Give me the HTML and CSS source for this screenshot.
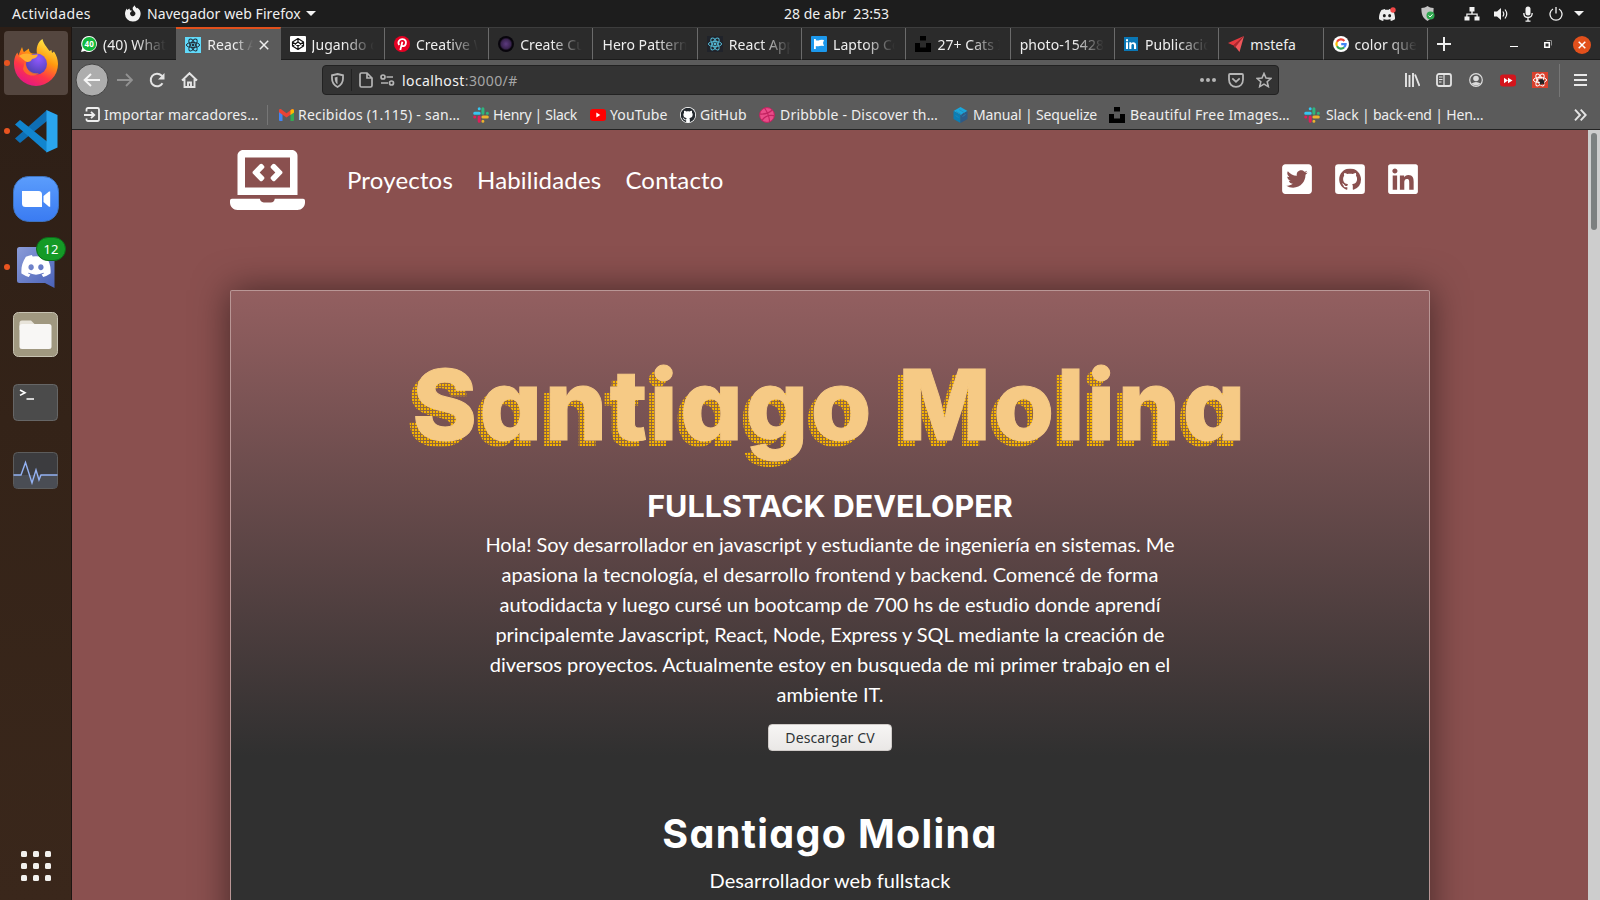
FILE: index.html
```html
<!DOCTYPE html>
<html lang="es">
<head>
<meta charset="utf-8">
<title>React App</title>
<link rel="stylesheet" href="styles.css">
</head>
<body>
<svg class="defs" width="0" height="0">
  <defs>
    <linearGradient id="ffg" x1="0.8" y1="0" x2="0.3" y2="1"><stop offset="0" stop-color="#fff44f"/><stop offset=".4" stop-color="#ff980e"/><stop offset=".7" stop-color="#ff3647"/><stop offset="1" stop-color="#e31587"/></linearGradient>
    <radialGradient id="ffp" cx=".6" cy=".25" r=".8"><stop offset="0" stop-color="#9059ff"/><stop offset="1" stop-color="#4b3fae"/></radialGradient>
    <linearGradient id="zoomg" x1="0" y1="0" x2="0" y2="1"><stop offset="0" stop-color="#5b9dfc"/><stop offset="1" stop-color="#3a7bf2"/></linearGradient>
    <linearGradient id="disg" x1="0" y1="0" x2="1" y2="1"><stop offset="0" stop-color="#8a9bd8"/><stop offset="1" stop-color="#4a62b8"/></linearGradient>
    <radialGradient id="orb"><stop offset="0" stop-color="#5d3a80"/><stop offset=".6" stop-color="#3a2450"/><stop offset=".8" stop-color="#08050c"/><stop offset="1" stop-color="#08050c"/></radialGradient>
    <symbol id="react" viewBox="0 0 16 16"><g fill="none" stroke="currentColor" stroke-width="1"><ellipse cx="8" cy="8" rx="6.6" ry="2.6"/><ellipse cx="8" cy="8" rx="6.6" ry="2.6" transform="rotate(60 8 8)"/><ellipse cx="8" cy="8" rx="6.6" ry="2.6" transform="rotate(120 8 8)"/></g><circle cx="8" cy="8" r="1.4" fill="currentColor"/></symbol>
    <symbol id="slack" viewBox="0 0 16 16"><g stroke-width="3" stroke-linecap="round"><path d="M6.2 1.7v.1M1.7 6.2h4.5" stroke="#36c5f0"/><path d="M9.9 1.7v4.5M14.3 6.2h.1" stroke="#2eb67d"/><path d="M9.9 14.3v-.1M9.9 9.9h4.4" stroke="#ecb22e"/><path d="M1.7 9.9h.1M6.2 9.9v4.4" stroke="#e01e5a"/></g></symbol>
    <symbol id="unsplash" viewBox="0 0 16 16"><path fill="#000" d="M5 0h6v4.5H5zM0 7h5v4.500h6V7h5v9H0z"/></symbol>
    <symbol id="cat" viewBox="0 0 16 16"><path d="M8 0C3.58 0 0 3.58 0 8c0 3.54 2.29 6.53 5.47 7.59.4.07.55-.17.55-.38 0-.19-.01-.82-.01-1.49-2.01.37-2.53-.49-2.69-.94-.09-.23-.48-.94-.82-1.13-.28-.15-.68-.52-.01-.53.63-.01 1.08.58 1.23.82.72 1.21 1.87.87 2.33.66.07-.52.28-.87.51-1.07-1.78-.2-3.64-.89-3.64-3.95 0-.87.31-1.59.82-2.15-.08-.2-.36-1.02.08-2.12 0 0 .67-.21 2.2.82.64-.18 1.32-.27 2-.27.68 0 1.36.09 2 .27 1.53-1.04 2.2-.82 2.2-.82.44 1.1.16 1.92.08 2.12.51.56.82 1.27.82 2.15 0 3.07-1.87 3.75-3.65 3.95.29.25.54.73.54 1.48 0 1.07-.01 1.93-.01 2.2 0 .21.15.46.55.38A8.013 8.013 0 0 0 16 8c0-4.42-3.58-8-8-8z" fill="currentColor"/></symbol>
    <symbol id="discord" viewBox="0 0 24 18"><path fill="currentColor" d="M20.300 1.500A19.800 19.800 0 0 0 15.400 0l-.7 1.300a18 18 0 0 0-5.400 0L8.600 0a19.700 19.700 0 0 0-4.900 1.500C.6 6.200-.3 10.700.1 15.200A20 20 0 0 0 6.100 18l1.300-2.100-2-.9.500-.4a14 14 0 0 0 12.200 0l.5.400-2 .9L17.900 18a20 20 0 0 0 6-2.800c.5-5.200-.8-9.700-3.600-13.700zM8 12.400c-1.200 0-2.200-1.100-2.200-2.400S6.800 7.600 8 7.600s2.200 1.100 2.200 2.400-1 2.400-2.200 2.400zm8 0c-1.200 0-2.200-1.100-2.200-2.400s1-2.400 2.200-2.400 2.200 1.100 2.200 2.400-1 2.400-2.200 2.400z"/></symbol>
  </defs>
</svg>

<header class="topbar">
  <span class="activities">Actividades</span>
  <div class="app-menu">
    <svg width="17" height="17" viewBox="0 0 17 17"><path fill="#f2f2f2" d="M8.500 16.500A7.600 7.600 0 0 1 1 9C1 6.800 1.700 5 2.800 3.500L3.200 5l2.200-1.500L6 5.300l2 .5-1.700 1.600c-.8 1.700.3 3.700 2.200 3.900 2.200.2 3.500-2 2.700-3.800C10.500 6 8 5 8.800 2.500L10.700.3c.2 1.500 1.200 2 2.300 3.200l.3-.8A7.600 7.600 0 0 1 8.500 16.500z"/></svg>
    <span>Navegador web Firefox</span><i class="caret"></i>
  </div>
  <span class="clock">28 de abr&nbsp; 23:53</span>
  <div class="tray">
    <svg class="t-discord" width="17" height="14" viewBox="0 0 17 14"><g color="#eee"><use href="#discord" y="2" width="16" height="12"/></g><circle cx="14" cy="3" r="2.700" fill="#f04747"/></svg>
    <svg class="t-shield" width="14" height="16" viewBox="0 0 14 16"><path fill="#c4c4c4" d="M6.500 0C8 1.300 10 2 12.600 2c0 6-1 10-6.100 13C1.500 12 .4 8 .4 2 3 2 5 1.300 6.500 0z"/><circle cx="9.500" cy="9.500" r="4" fill="#2fa84f"/><path d="m7.600 9.500 1.500 1.500 2.400-2.700" stroke="#fff" fill="none"/></svg>
    <svg class="t-net" width="16" height="14" viewBox="0 0 16 14"><path fill="#f2f2f2" d="M5.500 0h5v4.500H8.700v2h5v3H15.500V13.500h-5v-4h2V7.700h-9v1.800h2v4h-5v-4h1.800v-3h5v-2H5.500z"/></svg>
    <svg class="t-vol" width="16" height="14" viewBox="0 0 16 14"><path fill="#f2f2f2" d="M1 4.500h3L8 1v12L4 9.500H1z"/><path d="M9.800 4.500q2 2.500 0 5M12 2.500q3.500 4.500 0 9" fill="none" stroke="#f2f2f2" stroke-width="1.200"/></svg>
    <svg class="t-mic" width="10" height="16" viewBox="0 0 10 16"><rect x="2.500" y=".5" width="5" height="9" rx="2.500" fill="#f2f2f2"/><path d="M.8 7c0 6 8.400 6 8.400 0M5 11.500V15M2.500 15.200h5" fill="none" stroke="#f2f2f2" stroke-width="1.300"/></svg>
    <svg class="t-pow" width="14" height="14" viewBox="0 0 14 14"><path d="M4 2a6 6 0 1 0 6 0M7 0v6.500" fill="none" stroke="#f2f2f2" stroke-width="1.300"/></svg>
    <i class="caret"></i>
  </div>
</header>

<div class="desktop">
  <nav class="dock">
    <div class="launcher focused running">
      <svg width="46" height="48" viewBox="0 0 46 48"><path fill="url(#ffg)" d="M23 47A22 22 0 0 1 1 25c0-6 2-10 3.500-11.500l.8 3L9 8c1 2.500 1 4 2 5l5-3.500c-.2 3 1.300 4.500 3.500 5L24 15c-1-6 .5-12 5.500-15 1 5 4 7.500 7 12l2-1 .5 3 2-1.500c2.500 4 4 8 4 12.500a22 22 0 0 1-22 22z"/><circle cx="23.500" cy="25" r="10.500" fill="url(#ffp)"/><path fill="#ffb02e" d="M6 17c5-3 9-3 13-1l6-.5c-1 3-3 4-6 4.500-1 3-5 4-7 2z"/><path fill="#ff7b1c" opacity=".7" d="M12 22c0 7 6 14 14 12-6 5-14 2-16-4z"/></svg>
    </div>
    <div class="launcher running">
      <svg width="43" height="43" viewBox="0 0 43 43"><path fill="#0e6eb3" d="M0 28.500 5 33 32 11V0z"/><path fill="#1185cf" d="M0 14.500 5 10l27 21.500V42.500z"/><path fill="#2aa5ee" d="M31.500 0 42.500 5v32.500l-11 5z"/></svg>
    </div>
    <div class="launcher">
      <svg width="46" height="46" viewBox="0 0 46 46"><rect x=".5" y=".5" width="45" height="45" rx="15" fill="url(#zoomg)" stroke="#3f73bd"/><path fill="#fff" d="M9 15h16.500a3.500 3.500 0 0 1 3.500 3.500V31H12.500A3.500 3.500 0 0 1 9 27.500zM30.500 20l5.500-4.500h1.200v15.200H36L30.500 26z"/></svg>
    </div>
    <div class="launcher running">
      <svg width="38" height="41" viewBox="0 0 38 41"><path fill="url(#disg)" d="M2.500 0h35v41L28 36H2.500A2.500 2.500 0 0 1 0 33.500v-31A2.500 2.500 0 0 1 2.500 0z"/><g color="#fff"><use href="#discord" x="4" y="8" width="30" height="22"/></g></svg>
      <span class="badge">12</span>
    </div>
    <div class="launcher tile">
      <svg width="45" height="45" viewBox="0 0 45 45"><rect x=".5" y=".5" width="44" height="44" rx="5" fill="#a09880" stroke="#c7c2b2"/><path fill="#e8e4da" d="M6.500 11A2.500 2.500 0 0 1 9 8.500h9l3.500 3.500v6h-15z"/><rect x="6.500" y="12" width="32" height="25" rx="2.500" fill="#f8f7f5"/></svg>
    </div>
    <div class="launcher tile">
      <svg width="45" height="37" viewBox="0 0 45 37"><rect x=".5" y=".5" width="44" height="36" rx="4" fill="#4b4b4b" stroke="#666"/><path d="m7 6 5 2.700-5 2.700M13.500 15H21" stroke="#fff" stroke-width="1.600" fill="none"/></svg>
    </div>
    <div class="launcher tile">
      <svg width="45" height="37" viewBox="0 0 45 37"><rect x=".5" y=".5" width="44" height="36" rx="4" fill="#3c3c3f" stroke="#5c5c5c"/><path fill="#4a4d54" d="M1 23h43v13H1z"/><path d="M.5 23H8l4.500-12.500L19 31l4-13 3 10 2-5h16.500" fill="none" stroke="#94b2f3" stroke-width="1.400"/></svg>
    </div>
    <div class="grid-button"><i></i><i></i><i></i><i></i><i></i><i></i><i></i><i></i><i></i></div>
  </nav>

  <section class="browser">
    <div class="tabs">
      <div class="tab"><svg width="16" height="16" viewBox="0 0 16 16"><path fill="#fff" d="M8 0a8 8 0 1 1-4 15L0 16l1.200-4A8 8 0 0 1 8 0z"/><circle cx="8.200" cy="8" r="7" fill="#12b93d"/><text x="8.200" y="11" text-anchor="middle" class="count">40</text></svg><span>(40) WhatsApp</span></div>
      <div class="tab active"><svg width="16" height="16" viewBox="0 0 16 16" color="#20303c"><path fill="#61dafb" d="M0 0h16v16H0z"/><use href="#react" width="16" height="16"/></svg><span>React App</span><svg class="close" width="10" height="10" viewBox="0 0 10 10"><path d="m.8.8 8.400 8.400m0-8.400L.8 9.200" stroke="#eee" stroke-width="1.500"/></svg></div>
      <div class="tab"><svg width="16" height="16" viewBox="0 0 16 16"><rect width="16" height="16" rx="1" fill="#fff"/><path d="m8 2.500 5.500 3.500v4L8 13.500 2.500 10V6zM8 2.500V6m0 4v3.500M2.500 6 8 10l5.500-4m-11 4L8 6l5.500 4" fill="none" stroke="#111" stroke-width="1.200" stroke-linejoin="round"/></svg><span>Jugando con</span></div>
      <div class="tab"><svg width="16" height="16" viewBox="0 0 16 16"><circle cx="8" cy="8" r="8" fill="#e60023"/><path d="M5.200 9C3 5.500 6 3 8.500 3.200c3 .2 4 2.500 3.200 4.900-.8 2.300-3.200 2.600-3.900 1.300M8.400 5.800 6.300 14" fill="none" stroke="#fff" stroke-width="1.800"/></svg><span>Creative Web</span></div>
      <div class="tab"><svg width="16" height="16" viewBox="0 0 16 16"><circle cx="8" cy="8" r="8" fill="url(#orb)"/></svg><span>Create Custom</span></div>
      <div class="tab"><span>Hero Patterns</span></div>
      <div class="tab"><svg width="16" height="16" viewBox="0 0 16 16" color="#53b7d2"><path fill="#20232a" d="M0 0h16v16H0z"/><use href="#react" width="16" height="16"/></svg><span>React App</span></div>
      <div class="tab"><svg width="16" height="16" viewBox="0 0 16 16"><rect width="16" height="16" rx="1" fill="#1c98ec"/><path fill="#fff" d="M3 3h1.800v1.200q2 .8 4-.2 2-.6 4.200 0l-1 3 1 3q-2.500-.7-4.400 0-2 .6-3.800 0v3H3z"/></svg><span>Laptop Code</span></div>
      <div class="tab"><svg width="16" height="16"><use href="#unsplash" width="16" height="16"/></svg><span>27+ Cats Images</span></div>
      <div class="tab"><span>photo-1542831</span></div>
      <div class="tab"><svg width="14" height="14" viewBox="0 0 14 14" class="narrow"><path fill="#0a77b5" d="M0 0h14v14H0z"/><path fill="#fff" d="M2 5.300h2V12H2zM2 2.300h2v2H2zM5.300 5.300h2v.9c1.200-1.700 4.800-1.400 4.800 1.700V12H10V8.500c0-2-2.600-2-2.600 0V12H5.300z"/></svg><span>Publicación</span></div>
      <div class="tab"><svg width="16" height="16" viewBox="0 0 16 16"><path fill="#e5393f" d="M16 0 0 7l5.500 2.500z"/><path fill="#b3262d" d="M16 0 5.500 9.500 7 12z"/><path fill="#f0575b" d="m16 0-8.500 11 4 5z"/></svg><span class="whole">mstefa</span></div>
      <div class="tab"><svg width="16" height="16" viewBox="0 0 16 16"><circle cx="8" cy="8" r="8" fill="#fff"/><g fill="none" stroke-width="2.200"><path d="M11.400 4.900A4.600 4.600 0 0 0 4 5.800" stroke="#ea4335"/><path d="M4 5.800a4.600 4.600 0 0 0 0 4.500" stroke="#fbbc05"/><path d="M4 10.300a4.600 4.600 0 0 0 7.200 1" stroke="#34a853"/><path d="M11.200 11.300a4.600 4.600 0 0 0 1.400-3.100H8.200" stroke="#4285f4"/></g></svg><span>color que con</span></div>
      <div class="tab-tools">
        <svg width="14" height="14" viewBox="0 0 14 14"><path d="M7 0v14M0 7h14" stroke="#eee" stroke-width="2"/></svg>
        <i class="minimize"></i>
        <svg class="restore" width="8" height="8" viewBox="0 0 8 8"><path d="M.8 2.800h4.500v4.500H.8z" fill="none" stroke="#fff" stroke-width="1.500"/><path d="M2.500.5h5v5" fill="none" stroke="#8c8c8c"/></svg>
        <svg class="win-close" width="18" height="18" viewBox="0 0 18 18"><circle cx="9" cy="9" r="9" fill="#e2501c"/><path d="m5.700 5.700 6.600 6.600m0-6.600-6.600 6.600" stroke="#fff" stroke-width="1.500"/></svg>
      </div>
    </div>

    <div class="toolbar">
      <svg class="back" width="34" height="34" viewBox="0 0 34 34"><circle cx="17" cy="17" r="16" fill="#adadad" stroke="#444"/><path d="M25 17H10m6-6-6.300 6 6.300 6" fill="none" stroke="#f5f5f5" stroke-width="2"/></svg>
      <svg class="fwd" width="16" height="14" viewBox="0 0 16 14"><path d="M0 7h15M9 1l6 6-6 6" fill="none" stroke="#929292" stroke-width="1.800"/></svg>
      <svg class="reload" width="16" height="16" viewBox="0 0 16 16"><path d="M13.500 11.200A6.300 6.300 0 1 1 12.500 3.500L14 5.500" fill="none" stroke="#e4e4e4" stroke-width="2"/><path d="M15.500 1v6.500H9z" fill="#e4e4e4"/></svg>
      <svg class="home" width="17" height="16" viewBox="0 0 17 16"><path d="m1 8.500 7.500-7.300L16 8.500M3.500 7v8h10V7M7 15v-4.500h3V15" fill="none" stroke="#e4e4e4" stroke-width="1.900"/></svg>
      <div class="urlbar">
        <svg class="u-shield" width="13" height="15" viewBox="0 0 13 15"><path d="M6.500 1 12 2.300v3.200c0 4-2.200 6.700-5.500 8.500C3.200 12.200 1 9.500 1 5.500V2.300z" fill="none" stroke="#b5b5b5" stroke-width="1.800"/><path fill="#b5b5b5" d="M6.500 3.800v7.500C4.500 10 3.700 8 3.700 4.500z"/></svg>
        <i class="u-sep"></i>
        <svg class="u-page" width="14" height="16" viewBox="0 0 14 16"><path d="M1 2.500A1.500 1.500 0 0 1 2.500 1H8l5 5v7.500a1.500 1.500 0 0 1-1.500 1.500h-9A1.500 1.500 0 0 1 1 13.500zM8 1v5h5" fill="none" stroke="#b5b5b5" stroke-width="1.700"/></svg>
        <svg class="u-perm" width="15" height="12" viewBox="0 0 15 12"><g fill="none" stroke="#b5b5b5" stroke-width="1.700"><circle cx="3" cy="3" r="2"/><path d="M6.500 3H13M1 9h7"/><circle cx="11.500" cy="9" r="2"/></g></svg>
        <span class="url">localhost<em>:3000/#</em></span>
        <svg class="u-dots" width="16" height="4" viewBox="0 0 16 4"><g fill="#b5b5b5"><circle cx="2" cy="2" r="2"/><circle cx="8" cy="2" r="2"/><circle cx="14" cy="2" r="2"/></g></svg>
        <svg class="u-pocket" width="16" height="15" viewBox="0 0 16 15"><path d="M2 1h12a1 1 0 0 1 1 1v4.500C15 11 12 13.800 8 13.800S1 11 1 6.500V2a1 1 0 0 1 1-1zm2.300 4.300L8 8.800l3.700-3.500" fill="none" stroke="#b5b5b5" stroke-width="1.800"/></svg>
        <svg class="u-star" width="16" height="16" viewBox="0 0 16 16"><path d="m8 1.500 2 4.500 4.900.5-3.700 3.200 1.100 4.900L8 12.100l-4.300 2.500 1.100-4.900L1.100 6.500 6 6z" fill="none" stroke="#b5b5b5" stroke-width="1.600"/></svg>
      </div>
      <svg class="library" width="15" height="14" viewBox="0 0 15 14"><path d="M1 0v14M4.500 2v12M8 0v14M10 1.500 14.500 13" stroke="#e4e4e4" stroke-width="1.900"/></svg>
      <svg class="sidebar" width="16" height="14" viewBox="0 0 16 14"><rect x="1" y="1" width="14" height="12" rx="2" fill="none" stroke="#e4e4e4" stroke-width="1.800"/><path d="M8 1v12M3 4h3.500M3 6.500h3.500M3 9h2.500" stroke="#e4e4e4" stroke-width="1.200"/></svg>
      <svg class="account" width="14" height="14" viewBox="0 0 14 14"><circle cx="7" cy="7" r="6.300" fill="none" stroke="#dcdcdc" stroke-width="1.200"/><circle cx="7" cy="5.500" r="2.800" fill="#dcdcdc"/><path fill="#dcdcdc" d="M2.500 10.500Q7 7.500 11.500 10.500 7 14.500 2.500 10.500z"/></svg>
      <svg class="ytdl" width="16" height="13" viewBox="0 0 16 13"><rect y=".5" width="16" height="12" rx="3" fill="#d3151c"/><path fill="#fff" d="m4 3.800 4 2.700-4 2.700zM8 3.800l4.500 2.700L8 9.200z"/></svg>
      <svg class="rdev" width="16" height="16" viewBox="0 0 16 16" color="#fff"><path fill="#d8402c" d="M0 0h16v16H0z"/><use href="#react" width="16" height="16"/><path fill="#222" d="m7.500 7 2 .3 1-1 .5 1.700 1.500.5-.5 2 .5 1.500-1 .5-1.500-1-1 1.500-1.500-1 .5-2-1.500-1z"/></svg>
      <i class="t-sep"></i>
      <svg class="menu" width="13" height="12" viewBox="0 0 13 12"><path d="M0 1h13M0 6h13M0 11h13" stroke="#e8e8e8" stroke-width="1.900"/></svg>
    </div>

    <div class="bookmarks">
      <div class="bm b1"><svg width="16" height="15" viewBox="0 0 16 15"><path d="M2.500 4.500V2.500A1.500 1.500 0 0 1 4 1h9.500A1.500 1.500 0 0 1 15 2.500v10a1.500 1.500 0 0 1-1.500 1.500H4a1.500 1.500 0 0 1-1.500-1.500v-1M0 8h10M7 4.800 10.300 8 7 11.200" fill="none" stroke="#eee" stroke-width="1.800"/></svg><span>Importar marcadores…</span></div>
      <div class="bm b2"><svg width="15" height="12" viewBox="0 0 15 12"><path fill="#4285f4" d="M0 2v9a1 1 0 0 0 1 1h2.500V4z"/><path fill="#34a853" d="M15 2v9a1 1 0 0 1-1 1h-2.500V4z"/><path fill="#ea4335" d="M0 1.500C0 .2 1.500-.3 2.500.5l5 3.800 5-3.800c1-.8 2.500-.3 2.500 1v1.700L7.500 8.500 0 3.200z"/><path fill="#fbbc04" d="M11.500 1.200c1.500-1.500 3.500-1 3.500.5v1.700l-3.500 2.500z"/></svg><span>Recibidos (1.115) - san…</span></div>
      <div class="bm b3"><svg width="16" height="16"><use href="#slack" width="16" height="16"/></svg><span>Henry | Slack</span></div>
      <div class="bm b4"><svg width="16" height="12" viewBox="0 0 16 12"><rect width="16" height="12" rx="3" fill="#f00"/><path fill="#fff" d="m6.300 3.500 4 2.500-4 2.500z"/></svg><span>YouTube</span></div>
      <div class="bm b5"><svg width="16" height="16" viewBox="0 0 16 16" color="#24292e"><circle cx="8" cy="8" r="8" fill="#fff"/><use href="#cat" x=".7" y=".7" width="14.600" height="14.600"/></svg><span>GitHub</span></div>
      <div class="bm b6"><svg width="16" height="16" viewBox="0 0 16 16"><circle cx="8" cy="8" r="7.400" fill="#ea4c89" stroke="#c32361"/><path d="M5.500 1Q10 7 10.700 15M.7 7Q9 7.500 13.300 3M3 13.500Q7 7 15.300 8.700" fill="none" stroke="#c32361" stroke-width="1.200"/></svg><span>Dribbble - Discover th…</span></div>
      <div class="bm b7"><svg width="15" height="16" viewBox="0 0 15 16"><path fill="#19a7dc" d="m7.500 0 7 4-7 4-7-4z"/><path fill="#0b7eb5" d="m.5 4 7 4v8l-7-4z"/><path fill="#2d5a86" d="m14.500 4-7 4v8l7-4z"/><path d="m3 4.500 6 3.500M6 2.500l6 3.500M2.500 8.500l3 2m4-1 3-2" stroke="#2b86b5" stroke-width=".8"/></svg><span>Manual | Sequelize</span></div>
      <div class="bm b8"><svg width="16" height="16"><use href="#unsplash" width="16" height="16"/></svg><span>Beautiful Free Images…</span></div>
      <div class="bm b9"><svg width="16" height="16"><use href="#slack" width="16" height="16"/></svg><span>Slack | back-end | Hen…</span></div>
      <svg class="more" width="13" height="12" viewBox="0 0 13 12"><path d="m1 .7 5 5.300-5 5.300M6.700.7l5 5.300-5 5.300" fill="none" stroke="#e4e4e4" stroke-width="1.900"/></svg>
    </div>

    <div class="viewport">
      <main class="page">
        <nav class="site-nav">
          <svg class="brand" width="75" height="60" viewBox="0 0 640 512"><path fill="#fff" d="M255.030 261.650c6.250 6.250 16.380 6.250 22.630 0l11.310-11.310c6.250-6.250 6.250-16.380 0-22.630L253.250 192l35.710-35.720c6.250-6.250 6.250-16.380 0-22.630l-11.310-11.310c-6.250-6.250-16.380-6.250-22.630 0l-58.340 58.340c-6.250 6.250-6.250 16.380 0 22.630l58.350 58.340zm96.010-11.300l11.310 11.310c6.250 6.250 16.380 6.250 22.630 0l58.340-58.340c6.250-6.250 6.250-16.380 0-22.630l-58.340-58.340c-6.250-6.250-16.380-6.250-22.630 0l-11.310 11.310c-6.250 6.250-6.250 16.380 0 22.630L386.750 192l-35.710 35.720c-6.250 6.250-6.250 16.380 0 22.630zM624 416H381.540c-.74 19.810-14.710 32-32.740 32H288c-18.690 0-33.020-17.470-32.770-32H16c-8.800 0-16 7.200-16 16v16c0 35.200 28.800 64 64 64h512c35.200 0 64-28.800 64-64v-16c0-8.800-7.200-16-16-16zM576 48c0-26.400-21.600-48-48-48H112C85.600 0 64 21.600 64 48v336h512V48zm-64 272H128V64h384v256z"/></svg>
          <a>Proyectos</a><a>Habilidades</a><a>Contacto</a>
          <div class="social">
            <svg width="30" height="34" viewBox="0 0 448 512"><path fill="#fff" d="M400 32H48C21.500 32 0 53.500 0 80v352c0 26.500 21.500 48 48 48h352c26.500 0 48-21.500 48-48V80c0-26.500-21.500-48-48-48zm-48.900 158.800c.2 2.800.2 5.700.2 8.500 0 86.700-66 186.600-186.600 186.600-37.200 0-71.700-10.800-100.700-29.400 5.300.6 10.400.8 15.800.8 30.700 0 58.900-10.400 81.400-28-28.800-.6-53-19.500-61.300-45.500 10.100 1.500 19.200 1.500 29.600-1.200-30-6.100-52.500-32.500-52.500-64.400v-.8c8.700 4.900 18.900 7.900 29.600 8.300a65.447 65.447 0 0 1-29.200-54.600c0-12.200 3.200-23.400 8.900-33.100 32.300 39.800 80.800 65.800 135.200 68.600-9.300-44.500 24-80.600 64-80.600 18.900 0 35.900 7.900 47.900 20.700 14.800-2.800 29-8.300 41.600-15.800-4.900 15.200-15.200 28-28.800 36.100 13.200-1.400 26-5.100 37.800-10.200-8.900 13.100-20.100 24.700-32.900 34z"/></svg>
            <svg width="30" height="34" viewBox="0 0 448 512" color="#8a504f"><rect y="32" width="448" height="448" rx="48" fill="#fff"/><use href="#cat" x="60" y="96" width="330" height="330"/></svg>
            <svg width="30" height="34" viewBox="0 0 448 512"><path fill="#fff" d="M416 32H31.900C14.300 32 0 46.500 0 64.300v383.400C0 465.500 14.300 480 31.900 480H416c17.600 0 32-14.500 32-32.300V64.300c0-17.800-14.400-32.300-32-32.300zM135.400 416H69V202.200h66.500V416zm-33.200-243c-21.300 0-38.500-17.300-38.500-38.500S80.900 96 102.200 96c21.200 0 38.500 17.300 38.500 38.500 0 21.300-17.200 38.500-38.500 38.500zm282.100 243h-66.400V312c0-24.800-.5-56.700-34.500-56.700-34.600 0-39.900 27-39.900 54.900V416h-66.400V202.200h63.700v29.200h.9c8.900-16.800 30.600-34.500 62.900-34.500 67.200 0 79.700 44.300 79.700 101.900V416z"/></svg>
          </div>
        </nav>
        <article class="card">
          <h1 data-text="Santiago Molina">Santiago Molina</h1>
          <h2>FULLSTACK DEVELOPER</h2>
          <p>Hola! Soy desarrollador en javascript y estudiante de ingeniería en sistemas. Me apasiona la tecnología, el desarrollo frontend y backend. Comencé de forma autodidacta y luego cursé un bootcamp de 700 hs de estudio donde aprendí principalemte Javascript, React, Node, Express y SQL mediante la creación de diversos proyectos. Actualmente estoy en busqueda de mi primer trabajo en el ambiente IT.</p>
          <button>Descargar CV</button>
          <h3>Santiago Molina</h3>
          <p class="role">Desarrollador web fullstack</p>
        </article>
      </main>
      <div class="scrollbar"><i></i></div>
    </div>
  </section>
</div>
</body>
</html>
```
FILE: styles.css
```css
* { box-sizing: border-box; }
body { margin: 0; width: 1600px; height: 900px; overflow: hidden; display: flex; flex-direction: column; font-family: "Noto Sans", sans-serif; font-size: 14px; color: #eee; background: #1d1d1d; }
svg { display: block; flex: none; }
.defs { position: absolute; }
span { white-space: nowrap; }

/* System bar */
.topbar { height: 27px; flex: none; display: flex; align-items: center; background: #1d1d1d; color: #f0f0f0; }
.activities { width: 113px; padding-left: 12px; letter-spacing: .37px; }
.app-menu { display: flex; align-items: center; width: 671px; padding-left: 11px; gap: 6px; letter-spacing: .07px; }
.caret { border: 5px solid transparent; border-top-color: #f2f2f2; border-bottom: 0; flex: none; }
.app-menu .caret { margin-left: -1px; }
.clock { width: 595px; }
.tray { display: flex; align-items: center; }
.t-shield { margin-left: 25px; }
.t-net { margin-left: 29px; }
.t-vol { margin-left: 13px; }
.t-mic { margin-left: 14px; }
.t-pow { margin-left: 16px; }
.tray .caret { margin-left: 11px; }

/* Dock */
.desktop { flex: 1; display: flex; min-height: 0; }
.dock { width: 72px; flex: none; display: flex; flex-direction: column; gap: 4px; padding: 4px 3px 19px 4px; background: linear-gradient(#2c1e16, #342318 45%, #3a271b); border-right: 1px solid #1c1512; }
.launcher { height: 64px; width: 64px; flex: none; display: flex; align-items: center; justify-content: center; position: relative; border-radius: 4px; }
.launcher.tile { padding: 0 1px 1px 0; }
.launcher.focused { background: #54463f; }
.launcher.running::before { content: ""; position: absolute; left: 0; top: 29px; width: 6px; height: 6px; border-radius: 50%; background: #e95420; }
.badge { position: absolute; left: 32px; top: 2px; width: 30px; height: 24px; border-radius: 12px; background: #149a26; border: 1px solid #0d6b1a; color: #fff; font-size: 13px; line-height: 22px; text-align: center; }
.grid-button { margin: auto 0 0 17px; display: grid; grid-template-columns: repeat(3, 6px); gap: 6px; }
.grid-button i { height: 6px; border-radius: 1.500px; background: #f2f1ee; }

/* Browser chrome */
.browser { flex: 1; min-width: 0; display: flex; flex-direction: column; }
.tabs { height: 33px; flex: none; display: flex; background: #2b2b2b; border-top: 1px solid #3d3d3d; }
.tab { width: 104.300px; flex: none; display: flex; align-items: center; gap: 6px; padding: 2px 10px 1px 9px; border-right: 1px solid #6b6b6b; border-bottom: 1px solid #1c1c1c; }
.tab:first-child { border-right: 0; }
.tab span { flex: 1; min-width: 0; overflow: hidden; letter-spacing: .05px; -webkit-mask-image: linear-gradient(90deg, #000 calc(100% - 30px), transparent); mask-image: linear-gradient(90deg, #000 calc(100% - 30px), transparent); }
.tab span.whole { -webkit-mask-image: none; mask-image: none; }
.tab.active { background: #5b5b5b; border-color: #5b5b5b; margin-top: -1px; border-top: 2px solid #e2501c; }
.active span { -webkit-mask-image: linear-gradient(90deg, #000 60%, transparent); mask-image: linear-gradient(90deg, #000 60%, transparent); }
.close { margin-right: 1px; }
.narrow { margin-right: 1px; }
.count { font: bold 8px "Noto Sans", sans-serif; fill: #fff; }
.tab-tools { flex: 1; display: flex; align-items: center; padding: 0 0 0 9px; border-bottom: 1px solid #1c1c1c; }
.minimize { width: 8px; height: 1px; margin: 6px 0 0 59px; background: #fff; }
.restore { margin-left: 26px; }
.win-close { margin: 2px 0 0 21px; }

.toolbar { height: 40px; flex: none; display: flex; align-items: center; padding-left: 3px; background: #5b5b5b; }
.fwd { margin-left: 8px; }
.reload { margin-left: 16px; }
.home { margin-left: 16px; }
.urlbar { width: 957px; height: 30px; margin-left: 124px; display: flex; align-items: center; background: #333; border: 1px solid #222; border-radius: 4px; }
.u-shield { margin-left: 8px; }
.u-sep { width: 1px; height: 22px; margin: 0 7px; background: #222; }
.u-perm { margin-left: 7px; }
.url { margin-left: 7px; flex: 1; color: #f2f2f2; letter-spacing: .4px; }
.url em { font-style: normal; color: #a6a6a6; }
.u-pocket { margin-left: 12px; }
.u-star { margin: 0 6px 0 12px; }
.library { margin-left: 126px; }
.sidebar { margin-left: 16px; }
.account { margin-left: 17px; }
.ytdl { margin-left: 17px; }
.rdev { margin-left: 16px; }
.t-sep { width: 1px; height: 33px; margin-left: 11px; background: #767676; }
.menu { margin-left: 14px; }

.bookmarks { height: 30px; flex: none; display: flex; align-items: center; padding-left: 12px; background: #5b5b5b; border-bottom: 1px solid #222; }
.bm { display: flex; align-items: center; gap: 5px; flex: none; height: 20px; }
.b1 { width: 184px; gap: 4px; letter-spacing: .1px; border-right: 1px solid #767676; }
.b2 { width: 205px; padding-left: 11px; gap: 4px; letter-spacing: .22px; }
.b3 { width: 117px; gap: 4px; letter-spacing: -.32px; }
.b4 { width: 90px; gap: 4px; letter-spacing: .12px; }
.b5 { width: 79px; gap: 4px; }
.b6 { width: 194px; letter-spacing: .2px; }
.b7 { width: 156px; letter-spacing: -.15px; }
.b8 { width: 195px; letter-spacing: .22px; }
.b9 { width: 270px; gap: 6px; letter-spacing: -.18px; }

/* Site */
.viewport { flex: 1; min-height: 0; display: flex; overflow: hidden; }
.page { flex: 1; background: #8a504f; display: flex; flex-direction: column; align-items: center; font-family: Lato, sans-serif; color: #fff; }
.site-nav { width: 1200px; height: 100px; flex: none; display: flex; align-items: center; }
.site-nav a { font-size: 24px; margin-right: 24px; padding-bottom: 2px; letter-spacing: .18px; }
.brand { margin-right: 42px; }
.social { margin-left: auto; margin-right: 12px; padding-bottom: 2px; display: flex; gap: 23px; }
.card { width: 1200px; height: 700px; flex: none; margin-top: 60px; border: 1px solid rgba(255,255,255,.4); border-radius: 2px; background: linear-gradient(#935f60, #303030 465px) padding-box; box-shadow: 0 0 36px rgba(0,0,0,.5); display: flex; flex-direction: column; align-items: center; padding-top: 54px; }
h1, h2, h3 { font-family: Inter, sans-serif; font-feature-settings: "cv11"; margin: 0; white-space: nowrap; }
h1 { position: relative; isolation: isolate; font-size: 98px; line-height: 120px; font-weight: 800; letter-spacing: 2.700px; color: #f6ca85; -webkit-text-stroke: 1px #f6ca85; }
h1::before { content: attr(data-text); position: absolute; left: -6px; top: 6px; z-index: -1; color: transparent; -webkit-text-stroke: 0; background: conic-gradient(at 2px 2px, transparent 75%, #f5b400 0) 0 0 / 3px 3px, rgba(245,180,0,.22); -webkit-background-clip: text; background-clip: text; }
h2 { font-size: 30.500px; line-height: 40px; margin-top: 21px; font-weight: 700; }
p { margin: 0; width: 700px; font-size: 20px; line-height: 30px; text-align: center; letter-spacing: -.04px; }
h2 + p { margin-top: 3px; }
.role { letter-spacing: .08px; }
button { width: 124px; height: 27px; margin-top: 15px; padding: 0; border: 1px solid #cfcbc8; border-radius: 4px; background: linear-gradient(#f6f5f4, #eae8e6); font: 14px "Noto Sans", sans-serif; letter-spacing: .1px; color: #2e3436; }
h3 { font-size: 39.500px; line-height: 60px; margin-top: 53px; margin-bottom: 1px; font-weight: 700; letter-spacing: 1.300px; }
.scrollbar { width: 12px; flex: none; background: #cdcdcd; padding: 3px 3px; }
.scrollbar i { display: block; width: 6px; height: 97px; border-radius: 3px; background: #7c8080; }
```
